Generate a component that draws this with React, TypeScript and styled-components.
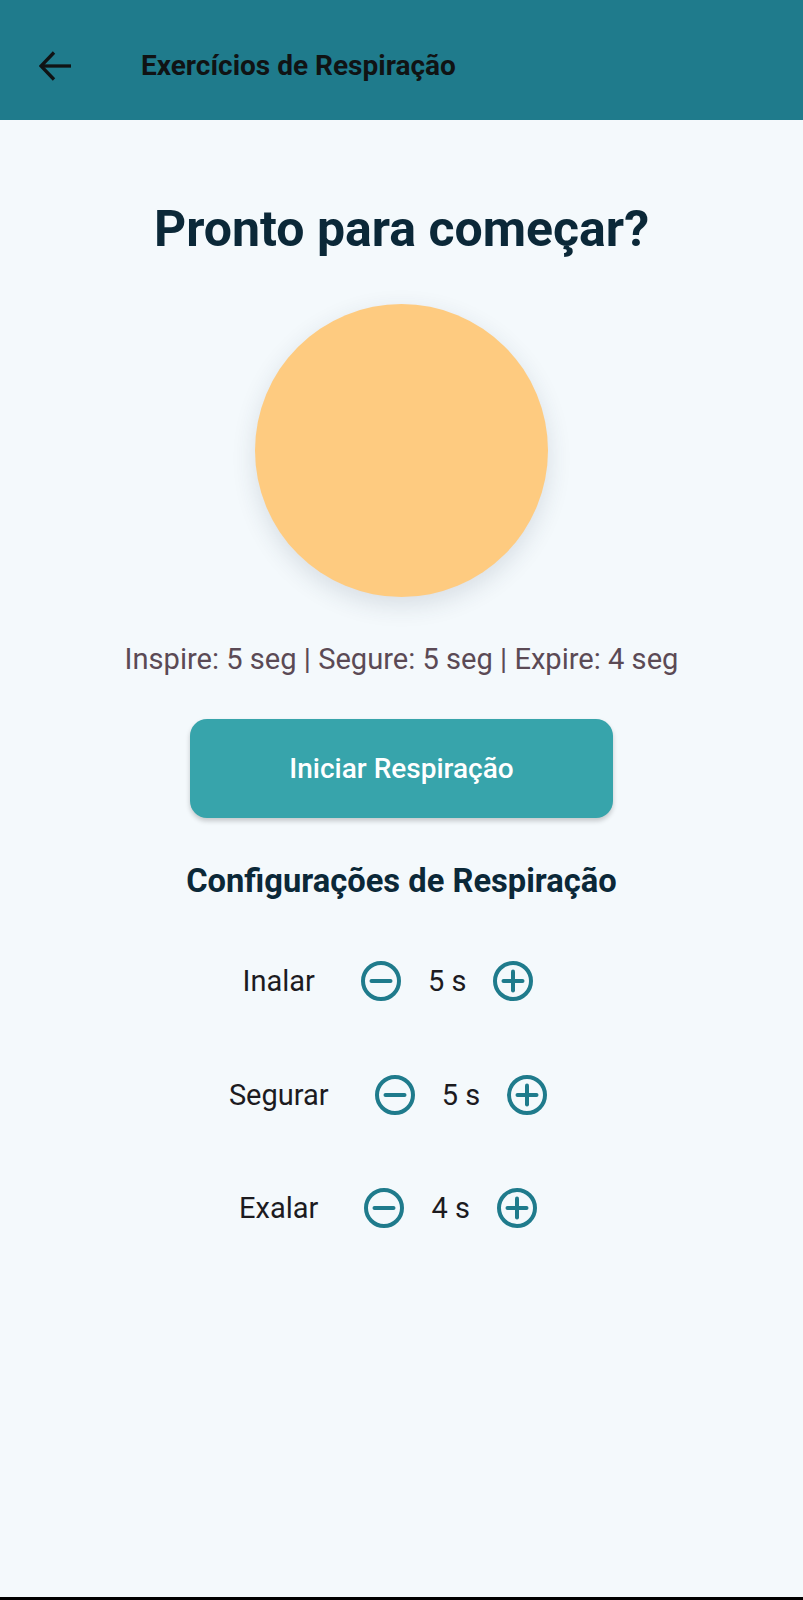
import React from "react";
import styled, { createGlobalStyle } from "styled-components";

const GlobalStyle = createGlobalStyle`
  html, body {
    margin: 0;
    padding: 0;
    background: #f4f9fc;
    font-family: Roboto, "Noto Sans", "Liberation Sans", sans-serif;
  }
  * { box-sizing: border-box; }
`;

const Page = styled.div`
  width: 803px;
  height: 1600px;
  display: flex;
  flex-direction: column;
  background: #f4f9fc;
`;

const AppBar = styled.header`
  height: 120px;
  flex: none;
  background: #1f7b8c;
  display: flex;
  align-items: center;
  padding-left: 39px;
  padding-top: 11px;
`;

const BackButton = styled.button`
  border: none;
  background: transparent;
  padding: 0;
  width: 32px;
  height: 30px;
  display: flex;
  margin-top: 1px;
  cursor: pointer;
`;

const AppBarTitle = styled.h1`
  margin: 0 0 0 70px;
  font-size: 28px;
  line-height: 32px;
  font-weight: 700;
  color: #101314;
`;

const Content = styled.main`
  display: flex;
  flex-direction: column;
  align-items: center;
  flex: 1;
`;

const Heading = styled.h2`
  margin: 79px 0 0;
  font-size: 50px;
  line-height: 60px;
  font-weight: 700;
  color: #0b2838;
`;

const BreathCircle = styled.div`
  margin-top: 45px;
  width: 293px;
  height: 293px;
  border-radius: 50%;
  background: #fecb80;
  box-shadow: 0 8px 24px rgba(40, 60, 80, 0.14);
`;

const PhaseInfo = styled.p`
  margin: 45px 0 0;
  font-size: 29.1px;
  line-height: 34px;
  color: #5b4a55;
`;

const StartButton = styled.button`
  margin-top: 43px;
  width: 423px;
  height: 99px;
  border: none;
  border-radius: 17px;
  background: #37a4ab;
  color: #ffffff;
  font-family: inherit;
  font-size: 28px;
  font-weight: 500;
  box-shadow: 0 3px 5px rgba(0, 0, 0, 0.2);
  cursor: pointer;
`;

const SectionTitle = styled.h3`
  margin: 44px 0 0;
  font-size: 32.7px;
  line-height: 38px;
  font-weight: 700;
  color: #0b2838;
`;

const SettingsList = styled.div`
  margin-top: 57px;
  display: flex;
  flex-direction: column;
  gap: 65.5px;
  width: 100%;
`;

const SettingRow = styled.div`
  display: flex;
  align-items: center;
  justify-content: center;
  height: 48px;
  padding-right: 27px;
`;

const SettingLabel = styled.span`
  font-size: 29px;
  line-height: 34px;
  color: #1c1b1f;
  margin-right: 46px;
`;

const SettingValue = styled.span`
  font-size: 29px;
  line-height: 34px;
  color: #1c1b1f;
  margin: 0 27px;
`;

const RoundIconButton = styled.button`
  border: none;
  background: transparent;
  padding: 0;
  width: 40px;
  height: 40px;
  display: flex;
  cursor: pointer;
`;

const BottomBar = styled.div`
  height: 3px;
  flex: none;
  background: #000;
`;

const ICON = "#1f7b8c";

const MinusIcon = () => (
  <svg width="40" height="40" viewBox="0 0 40 40">
    <circle cx="20" cy="20" r="18" fill="none" stroke={ICON} strokeWidth="4" />
    <line x1="10.5" y1="20" x2="29.5" y2="20" stroke={ICON} strokeWidth="4" strokeLinecap="round" />
  </svg>
);

const PlusIcon = () => (
  <svg width="40" height="40" viewBox="0 0 40 40">
    <circle cx="20" cy="20" r="18" fill="none" stroke={ICON} strokeWidth="4" />
    <line x1="10.5" y1="20" x2="29.5" y2="20" stroke={ICON} strokeWidth="4" strokeLinecap="round" />
    <line x1="20" y1="10.5" x2="20" y2="29.5" stroke={ICON} strokeWidth="4" strokeLinecap="round" />
  </svg>
);

const BackArrow = () => (
  <svg width="32" height="30" viewBox="0 0 32 30">
    <polyline points="15,1.5 2,15 15,28.5" fill="none" stroke="#101314" strokeWidth="3.3" />
    <line x1="2.5" y1="15" x2="32" y2="15" stroke="#101314" strokeWidth="3.3" />
  </svg>
);

const settings = [
  { label: "Inalar", value: 5 },
  { label: "Segurar", value: 5 },
  { label: "Exalar", value: 4 },
];

export default function App() {
  return (
    <>
      <GlobalStyle />
      <Page>
        <AppBar>
          <BackButton aria-label="Voltar">
            <BackArrow />
          </BackButton>
          <AppBarTitle>Exercícios de Respiração</AppBarTitle>
        </AppBar>
        <Content>
          <Heading>Pronto para começar?</Heading>
          <BreathCircle />
          <PhaseInfo>Inspire: 5 seg | Segure: 5 seg | Expire: 4 seg</PhaseInfo>
          <StartButton>Iniciar Respiração</StartButton>
          <SectionTitle>Configurações de Respiração</SectionTitle>
          <SettingsList>
            {settings.map((s) => (
              <SettingRow key={s.label}>
                <SettingLabel>{s.label}</SettingLabel>
                <RoundIconButton aria-label={`Diminuir ${s.label}`}>
                  <MinusIcon />
                </RoundIconButton>
                <SettingValue>{s.value} s</SettingValue>
                <RoundIconButton aria-label={`Aumentar ${s.label}`}>
                  <PlusIcon />
                </RoundIconButton>
              </SettingRow>
            ))}
          </SettingsList>
        </Content>
        <BottomBar />
      </Page>
    </>
  );
}
